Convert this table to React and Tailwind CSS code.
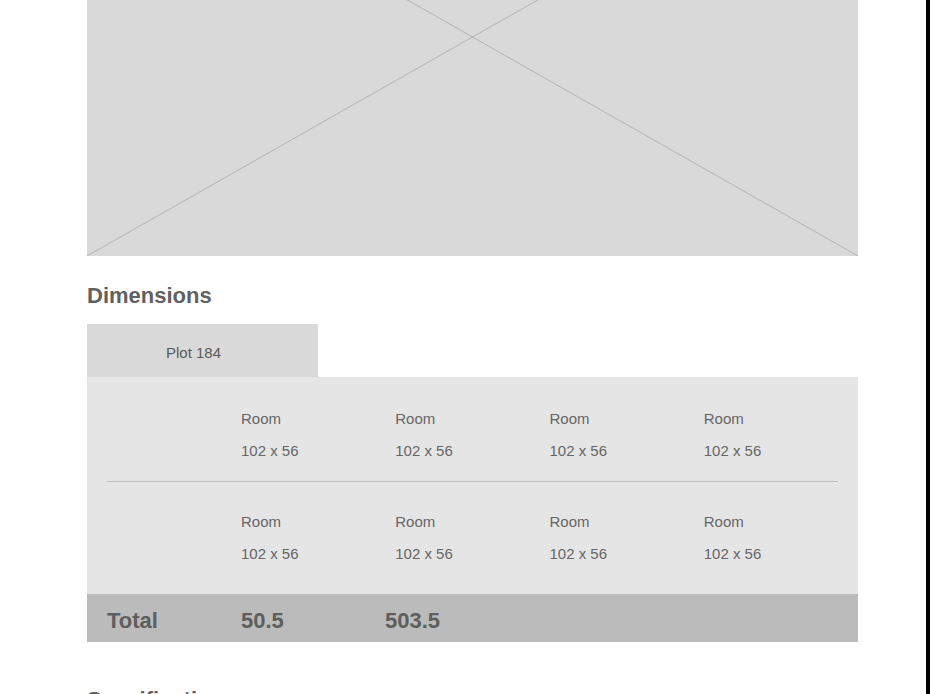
const rooms = [
  [
    { name: 'Room', size: '102 x 56' },
    { name: 'Room', size: '102 x 56' },
    { name: 'Room', size: '102 x 56' },
    { name: 'Room', size: '102 x 56' }
  ],
  [
    { name: 'Room', size: '102 x 56' },
    { name: 'Room', size: '102 x 56' },
    { name: 'Room', size: '102 x 56' },
    { name: 'Room', size: '102 x 56' }
  ]
]

function RoomRow({ items, className }) {
  return (
    <div className={`grid grid-cols-4 pl-[154px] ${className}`}>
      {items.map((room, i) => (
        <div key={i} className="flex flex-col gap-[12px] text-[15px] leading-[20px] text-[#666666]">
          <span>{room.name}</span>
          <span>{room.size}</span>
        </div>
      ))}
    </div>
  )
}

export default function App() {
  return (
    <div className="flex h-[694px] overflow-hidden bg-white font-['Liberation_Sans',Arial,sans-serif]">
      <div className="flex-1">
        <div className="ml-[87px] w-[771px]">
          <div className="h-[256px] overflow-hidden bg-[#d9d9d9]">
            <svg width="771" height="256" viewBox="0 0 771 256" className="block">
              <line x1="0" y1="256" x2="771" y2="-182" stroke="#a9a9a9" strokeWidth="0.8" />
              <line x1="0" y1="-182" x2="771" y2="256" stroke="#a9a9a9" strokeWidth="0.8" />
            </svg>
          </div>

          <h2 className="mt-[27px] text-[22px] leading-[26px] font-bold text-[#616161]">Dimensions</h2>

          <div className="mt-[15px] flex h-[53px] w-[231px] items-center bg-[#d9d9d9] pt-[6px] pl-[79px] text-[15px] text-[#595959]">
            Plot 184
          </div>

          <div className="bg-[#e5e5e5]">
            <RoomRow items={rooms[0]} className="pt-[32px] pb-[20px]" />
            <div className="mx-[20px] h-px bg-[#bdbdbd]" />
            <RoomRow items={rooms[1]} className="pt-[30px] pb-[30px]" />
          </div>

          <div className="flex h-[48px] items-center bg-[#bbbbbb] pt-[4px] pl-[20px] text-[22px] font-bold text-[#5e5e5e]">
            <span className="w-[134px]">Total</span>
            <span className="w-[144px]">50.5</span>
            <span>503.5</span>
          </div>

          <h2 className="mt-[45px] text-[22px] leading-[26px] font-bold text-[#616161]">Specifications</h2>
        </div>
      </div>
      <div className="w-[4px] bg-black" />
    </div>
  )
}
